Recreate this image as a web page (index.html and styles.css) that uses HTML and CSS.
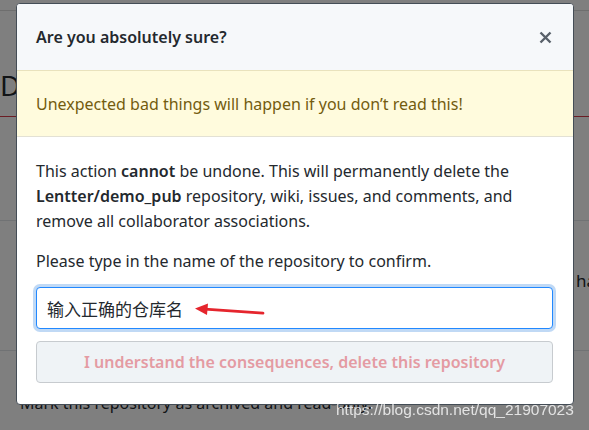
FILE: index.html
```html
<!DOCTYPE html>
<html lang="en">
<head>
<meta charset="utf-8">
<title>Delete repository</title>
<link rel="stylesheet" href="styles.css">
</head>
<body>
  <div class="page">
    <div class="topbar"></div>
    <h2 class="zone-title">Danger Zone</h2>
    <div class="zone">
      <div class="zone-row row-1"></div>
      <div class="zone-row row-2"><span class="row-tail">has</span></div>
      <div class="zone-row row-3">
        <p class="row-desc">Mark this repository as archived and read-only.</p>
      </div>
    </div>
  </div>

  <div class="backdrop"></div>

  <div class="dialog">
    <div class="dialog-header">
      <h3 class="dialog-title">Are you absolutely sure?</h3>
      <button class="dialog-close" type="button" aria-label="Close">
        <svg width="13" height="13" viewBox="0 0 13 13"><path d="M1.5 1.5 L11.5 11.5 M11.5 1.5 L1.5 11.5" stroke="#586069" stroke-width="2.4" stroke-linecap="butt" fill="none"/></svg>
      </button>
    </div>
    <div class="flash">Unexpected bad things will happen if you don’t read this!</div>
    <div class="dialog-body">
      <p class="para">This action <strong>cannot</strong> be undone. This will permanently delete the <strong>Lentter/demo_pub</strong> repository, wiki, issues, and comments, and remove all collaborator associations.</p>
      <p class="para para-last">Please type in the name of the repository to confirm.</p>
      <div class="input-wrap">
        <input class="confirm-input" type="text" value="输入正确的仓库名">
        <svg class="arrow" width="74" height="16" viewBox="0 0 74 16"><path d="M10 6.2 L68 10.2" stroke="#e5252d" stroke-width="2.8" stroke-linecap="round" fill="none"/><path d="M0 5.5 L13 0.4 L12 12 Z" fill="#e5252d"/></svg>
      </div>
      <button class="btn-danger" type="button" disabled>I understand the consequences, delete this repository</button>
    </div>
  </div>

  <div class="watermark">https://blog.csdn.net/qq_21907023</div>
</body>
</html>
```
FILE: styles.css
```css
* { box-sizing: border-box; }
html, body {
  margin: 0;
  padding: 0;
  width: 589px;
  height: 430px;
  overflow: hidden;
  background: #ffffff;
  font-family: "Noto Sans", "Open Sans", "Noto Sans CJK SC", sans-serif;
  color: #24292e;
}

.page { width: 589px; }
.topbar { height: 11px; border-bottom: 1px solid #dcdcdc; }
.zone-title {
  margin: 0;
  padding: 56px 0 0 0;
  height: 105px;
  font-size: 28px;
  font-weight: 400;
  line-height: 36px;
  color: #24292e;
}
.zone { border-top: 1px solid #d73a49; }
.zone-row { border-bottom: 1px solid #e1e4e8; }
.row-1 { height: 104px; }
.row-2 { height: 130px; padding: 48px 0 0 576px; font-size: 17px; line-height: 24px; white-space: nowrap; }
.row-3 { height: 80px; padding: 40px 0 0 20px; }
.row-desc { margin: 0; font-size: 16px; line-height: 24px; white-space: nowrap; }

.backdrop {
  position: fixed;
  inset: 0;
  background: rgba(0, 0, 0, 0.5);
}

.dialog {
  position: absolute;
  left: 16px;
  top: 3px;
  width: 558px;
  height: 402px;
  background: #ffffff;
  border: 1px solid #444d56;
  border-radius: 4px;
  overflow: hidden;
}
.dialog-header {
  height: 66px;
  background: #f6f8fa;
  display: flex;
  align-items: center;
  justify-content: space-between;
  padding: 0 21px 0 19px;
}
.dialog-title {
  margin: 0;
  font-size: 16px;
  font-weight: 600;
  line-height: 24px;
  color: #24292e;
}
.dialog-close {
  border: 0;
  background: transparent;
  padding: 0;
  width: 13px;
  height: 13px;
  display: flex;
}
.flash {
  height: 67px;
  background: #fffbdd;
  border-top: 1px solid #e9e2bd;
  border-bottom: 1px solid #e3e1d4;
  color: #735c0f;
  padding: 0 19px;
  display: flex;
  align-items: center;
  font-size: 16px;
}
.dialog-body { padding: 22px 19px 20px; }
.para {
  margin: 0 0 15px;
  font-size: 16px;
  line-height: 25px;
  color: #24292e;
}
.para strong { font-weight: 600; }
.para-last { margin-bottom: 13px; }

.input-wrap { position: relative; }
.confirm-input {
  display: block;
  width: 517px;
  height: 42px;
  border: 1px solid #2188ff;
  border-radius: 4px;
  box-shadow: 0 0 0 3px rgba(3, 102, 214, 0.25);
  padding: 0 10px;
  font-family: "Noto Sans CJK SC", sans-serif;
  font-size: 17px;
  color: #24292e;
  outline: none;
  background: #ffffff;
}
.arrow {
  position: absolute;
  left: 159px;
  top: 16px;
}
.btn-danger {
  display: block;
  margin-top: 12px;
  width: 517px;
  height: 42px;
  background: #eff3f6;
  border: 1px solid #c7cbcf;
  border-radius: 4px;
  color: #e49ba3;
  font-family: inherit;
  font-size: 16px;
  font-weight: 600;
}

.watermark {
  position: absolute;
  left: 336px;
  top: 399px;
  font-family: "Liberation Sans", Arial, sans-serif;
  font-size: 15.5px;
  line-height: 22px;
  color: rgba(255, 255, 255, 0.78);
  white-space: nowrap;
}
```
